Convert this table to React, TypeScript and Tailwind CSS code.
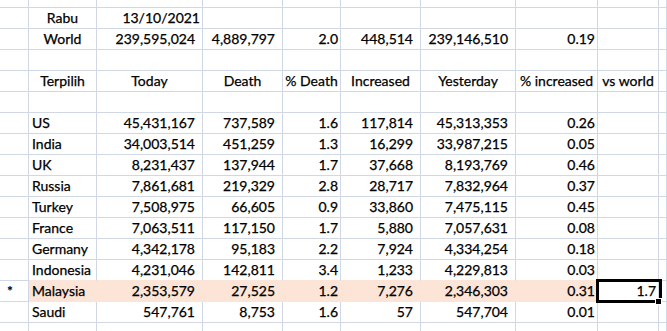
import React from "react";

type Align = "l" | "c" | "r" | "ra" | "a";
type C = { t?: string; a?: Align; up?: boolean };

const W = [
  "w-[29px]",
  "w-[68px]",
  "w-[106px]",
  "w-[80px]",
  "w-[58px]",
  "w-[80px]",
  "w-[95px]",
  "w-[82px]",
  "w-[61px]",
  "flex-1",
];

const alignCls: Record<Align, string> = {
  l: "justify-start pl-[3px]",
  c: "justify-center",
  r: "justify-end pr-[2px]",
  ra: "justify-end pr-[7px]",
  a: "justify-start pl-[7px]",
};

const data: string[][] = [
  ["US", "45,431,167", "737,589", "1.6", "117,814", "45,313,353", "0.26"],
  ["India", "34,003,514", "451,259", "1.3", "16,299", "33,987,215", "0.05"],
  ["UK", "8,231,437", "137,944", "1.7", "37,668", "8,193,769", "0.46"],
  ["Russia", "7,861,681", "219,329", "2.8", "28,717", "7,832,964", "0.37"],
  ["Turkey", "7,508,975", "66,605", "0.9", "33,860", "7,475,115", "0.45"],
  ["France", "7,063,511", "117,150", "1.7", "5,880", "7,057,631", "0.08"],
  ["Germany", "4,342,178", "95,183", "2.2", "7,924", "4,334,254", "0.18"],
  ["Indonesia", "4,231,046", "142,811", "3.4", "1,233", "4,229,813", "0.03"],
  ["Malaysia", "2,353,579", "27,525", "1.2", "7,276", "2,346,303", "0.31"],
  ["Saudi", "547,761", "8,753", "1.6", "57", "547,704", "0.01"],
];

const empty = (): C[] => Array.from({ length: 10 }, () => ({}));

function Row({
  cells,
  h = "h-[21px]",
  kind,
}: {
  cells: C[];
  h?: string;
  kind?: "above" | "hl";
}) {
  return (
    <div className={`flex ${h}`}>
      {cells.map((c, i) => {
        const inHl = i >= 1 && i <= 7;
        let border = "border-[#d0d7e5]";
        let bg = "";
        if (kind === "hl" && inHl) {
          bg = "bg-[#fce4d6]";
          border = i === 7 ? "border-b-[#fce4d6] border-r-[#d0d7e5]" : "border-[#fce4d6]";
        } else if (kind === "above" && inHl) {
          border = "border-b-[#fce4d6] border-r-[#d0d7e5]";
        }
        const isSel = kind === "hl" && i === 8;
        return (
          <div
            key={i}
            className={`${W[i]} shrink-0 box-border border-r border-b ${border} ${bg} flex items-start whitespace-nowrap ${
              c.a ? alignCls[c.a] : ""
            } ${isSel ? "relative z-10" : ""}`}
          >
            {c.t !== undefined && (
              <span className={`leading-[20px] ${c.up ? "relative top-[-6px]" : ""}`}>{c.t}</span>
            )}
            {isSel && (
              <>
                <div className="absolute left-[-2px] top-[-2px] w-[66px] h-[24px] border-[3px] border-black" />
                <div className="absolute left-[57px] top-[17px] w-[7px] h-[7px] bg-black border border-white" />
              </>
            )}
          </div>
        );
      })}
    </div>
  );
}

export default function App() {
  const r1 = empty();
  r1[1] = { t: "Rabu", a: "c" };
  r1[2] = { t: "13/10/2021", a: "r" };

  const r2 = empty();
  r2[1] = { t: "World", a: "c" };
  r2[2] = { t: "239,595,024", a: "ra" };
  r2[3] = { t: "4,889,797", a: "ra" };
  r2[4] = { t: "2.0", a: "r" };
  r2[5] = { t: "448,514", a: "ra" };
  r2[6] = { t: "239,146,510", a: "ra" };
  r2[7] = { t: "0.19", a: "r" };

  const hdr = empty();
  ["Terpilih", "Today", "Death", "% Death", "Increased", "Yesterday", "% increased", "vs world"].forEach(
    (t, k) => (hdr[k + 1] = { t, a: "c" })
  );

  const dataRows = data.map((d) => {
    const r = empty();
    r[1] = { t: d[0], a: "l" };
    r[2] = { t: d[1], a: "ra" };
    r[3] = { t: d[2], a: "ra" };
    r[4] = { t: d[3], a: "r" };
    r[5] = { t: d[4], a: "ra" };
    r[6] = { t: d[5], a: "ra" };
    r[7] = { t: d[6], a: "r" };
    if (d[0] === "Malaysia") {
      r[0] = { t: "*", a: "a", up: false };
      r[8] = { t: "1.7", a: "r" };
    }
    return r;
  });

  return (
    <div className="w-[667px] h-[331px] overflow-hidden bg-white text-black font-['Lato',sans-serif] text-[14px] leading-[20px] [-webkit-text-stroke:0.25px_#000]">
      <Row cells={empty()} h="h-[8px]" />
      <Row cells={r1} />
      <Row cells={r2} />
      <Row cells={empty()} />
      <Row cells={hdr} />
      <Row cells={empty()} />
      {dataRows.map((r, k) => (
        <Row
          key={k}
          cells={r}
          kind={data[k][0] === "Malaysia" ? "hl" : data[k][0] === "Indonesia" ? "above" : undefined}
        />
      ))}
      <Row cells={empty()} />
    </div>
  );
}
